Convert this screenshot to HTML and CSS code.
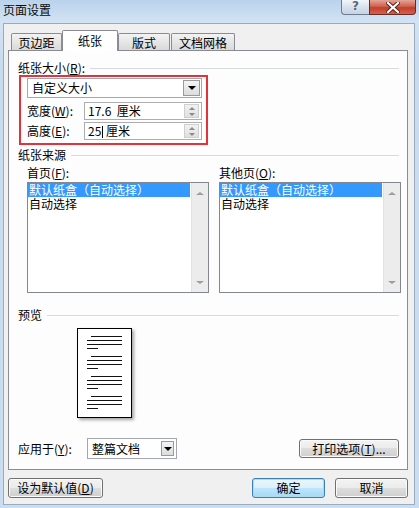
FILE: index.html
```html
<!DOCTYPE html>
<html lang="zh-CN">
<head>
<meta charset="utf-8">
<title>页面设置</title>
<link rel="stylesheet" href="styles.css">
</head>
<body>
<div class="window">
    <div class="titlebar">
        <span class="title">页面设置</span>
        <div class="caption">
            <span class="cap-help">?</span>
            <span class="cap-close">
                <svg width="14" height="11" viewBox="0 0 14 11"><path d="M2 1 L12 10 M12 1 L2 10" stroke="#5a1d14" stroke-width="4" stroke-linecap="square"/><path d="M2 1 L12 10 M12 1 L2 10" stroke="#fff" stroke-width="2.2" stroke-linecap="square"/></svg>
            </span>
        </div>
    </div>

    <div class="client">
        <!-- 标签 -->
        <ul class="tabs">
            <li class="t1">页边距</li>
            <li class="t2 on">纸张</li>
            <li class="t3">版式</li>
            <li class="t4">文档网格</li>
        </ul>

        <div class="panel">
            <div class="group-head"><span>纸张大小(<u>R</u>):</span><i class="rule"></i></div>

            <div class="mark">
                <div class="combo size-combo">
                    <span class="combo-text">自定义大小</span>
                    <b class="drop"><i class="tri"></i></b>
                </div>
                <div class="field">
                    <label>宽度(<u>W</u>):</label>
                    <div class="spin">
                        <span class="spin-text">17.6&nbsp; 厘米</span>
                        <b class="spinbtn"><i class="up"></i><i class="down"></i></b>
                    </div>
                </div>
                <div class="field f2">
                    <label>高度(<u>E</u>):</label>
                    <div class="spin">
                        <span class="spin-text">25<i class="caret"></i> 厘米</span>
                        <b class="spinbtn"><i class="up"></i><i class="down"></i></b>
                    </div>
                </div>
            </div>

            <div class="group-head head2"><span>纸张来源</span><i class="rule"></i></div>

            <div class="sources">
                <div class="src">
                    <label>首页(<u>F</u>):</label>
                    <div class="listbox">
                        <ul class="items">
                            <li class="sel">默认纸盒（自动选择）</li>
                            <li>自动选择</li>
                        </ul>
                        <div class="vscroll"><i class="up"></i><i class="down"></i></div>
                    </div>
                </div>
                <div class="src">
                    <label>其他页(<u>O</u>):</label>
                    <div class="listbox">
                        <ul class="items">
                            <li class="sel">默认纸盒（自动选择）</li>
                            <li>自动选择</li>
                        </ul>
                        <div class="vscroll"><i class="up"></i><i class="down"></i></div>
                    </div>
                </div>
            </div>

            <div class="group-head head3"><span>预览</span><i class="rule"></i></div>

            <div class="page">
                <div class="para"><i class="l1"></i><i class="l2"></i><i class="l2"></i><i class="l4"></i></div>
                <div class="para"><i class="l1"></i><i class="l2"></i><i class="l2"></i><i class="l4"></i></div>
                <div class="para"><i class="l1"></i><i class="l2"></i><i class="l2"></i><i class="l4"></i></div>
                <div class="para"><i class="l1"></i><i class="l2"></i><i class="l2"></i><i class="l4"></i></div>
            </div>

            <div class="apply-row">
                <label>应用于(<u>Y</u>):</label>
                <div class="combo apply-combo">
                    <span class="combo-text">整篇文档</span>
                    <b class="drop"><i class="tri"></i></b>
                </div>
                <span class="btn print-btn">打印选项(<u>T</u>)...</span>
            </div>
        </div>

        <div class="footer">
            <span class="btn default-btn">设为默认值(<u>D</u>)</span>
            <span class="btn ok-btn">确定</span>
            <span class="btn cancel-btn">取消</span>
        </div>
    </div>
</div>
</body>
</html>
```

FILE: styles.css
```css
*{margin:0;padding:0;box-sizing:border-box}
body{width:419px;height:508px;overflow:hidden;font:12px/14px "Noto Sans CJK SC","Microsoft YaHei",sans-serif;color:#000;background:#c9dcef}
ul{list-style:none}
u{text-decoration:underline;text-underline-offset:1px}

.window{height:508px;display:flex;flex-direction:column;background:linear-gradient(#bad2eb,#d3e3f4 22px,#c9dcef 60px,#cbddf0)}

/* 标题栏 */
.titlebar{height:23px;display:flex;justify-content:space-between;align-items:flex-start;padding-left:3px}
.title{line-height:20px;color:#0b0b0b}
.caption{display:flex;margin-right:3px}
.cap-help{width:28px;height:15px;border:1px solid #6d7c90;border-top:none;border-right:none;border-radius:0 0 0 4px;background:linear-gradient(#f3f6fb,#d8e1ed 50%,#c7d3e3);text-align:center;font:bold 12px/13px "DejaVu Sans",sans-serif;color:#55657a;text-shadow:0 0 1px #fff}
.cap-close{width:47px;height:15px;border:1px solid #6b2a22;border-top:none;border-radius:0 0 4px 0;background:linear-gradient(#e5a497,#d0624f 45%,#c23e2b 55%,#d2634d);display:flex;justify-content:center;align-items:center}

/* 客户区 */
.client{flex:1;margin:0 4px 3px 3px;background:#f0f0f0;border:1px solid #9aabc0;display:flex;flex-direction:column}

.tabs{height:26px;display:flex;align-items:flex-end;padding-left:7px}
.tabs li{height:17px;border:1px solid #898c95;border-bottom:none;border-radius:2px 2px 0 0;background:linear-gradient(#f3f3f3,#e6e6e6 50%,#d9d9d9);text-align:center;line-height:17px}
.tabs .t1{width:51px}
.tabs .t2{width:56px}
.tabs .t3{width:52px}
.tabs .t4{width:64px;margin-left:1px}
.tabs li.on{height:21px;margin-bottom:-1px;background:#fff;position:relative;line-height:19px;border-left:1px solid #898c95}

.panel{height:420px;margin:0 6px 0 4px;border:1px solid #898c95;background:#fdfdfd;padding:10px 8px 10px 9px;display:flex;flex-direction:column}

.group-head{height:14px;display:flex;align-items:center}
.group-head .rule{flex:1;height:1px;background:#d5dadf;margin-left:5px}
.head2{margin-top:3px}
.head3{margin-top:15px}

/* 红色标记框 */
.mark{width:189px;height:70px;margin-left:1px;border:2px solid #e2333a;padding:1px 0 0 6px}

.combo{display:flex;height:20px;border:1px solid #a3a8b0;background:#fff}
.combo-text{flex:1;padding-left:4px;line-height:18px}
.drop{width:17px;margin:1px;border:1px solid #9a9a9a;background:linear-gradient(#f4f4f4,#dcdcdc);display:flex;align-items:center;justify-content:center}
.tri{width:0;height:0;border-left:4px solid transparent;border-right:4px solid transparent;border-top:4px solid #000}
.size-combo{width:175px}

.field{display:flex;align-items:center;margin-top:4px}
.field.f2{margin-top:2px}
.field label{width:57px}
.spin{width:118px;height:18px;border:1px solid #abadb3;background:#fff;display:flex}
.spin-text{flex:1;padding-left:3px;line-height:16px}
.caret{display:inline-block;width:1px;height:12px;background:#000;vertical-align:-2px;margin-left:1px}
.spinbtn{width:15px;margin:1px 2px 1px 0;background:linear-gradient(#f2f2f2,#e0e0e0);border:1px solid #cfcfcf;display:flex;flex-direction:column;align-items:center;justify-content:space-around}
.spinbtn .up{width:0;height:0;border-left:3px solid transparent;border-right:3px solid transparent;border-bottom:3px solid #8a8a8a}
.spinbtn .down{width:0;height:0;border-left:3px solid transparent;border-right:3px solid transparent;border-top:3px solid #8a8a8a}

/* 纸张来源 */
.sources{display:grid;grid-template-columns:182px 182px;column-gap:10px;margin-left:9px;margin-top:4px}
.src label{display:block;height:14px}
.listbox{margin-top:2px;height:111px;border:1px solid #828790;background:#fff;display:flex}
.items{flex:1;padding:0 1px 0 0}
.items li{height:14px;line-height:14px;padding-left:1px;white-space:nowrap}
.items li.sel{background:#3399ff;color:#fff}
.vscroll{width:17px;background:#ececec;border-left:1px solid #e2e2e2;display:flex;flex-direction:column;align-items:center;justify-content:space-between;padding:9px 0 8px}
.vscroll .up{width:0;height:0;border-left:4px solid transparent;border-right:4px solid transparent;border-bottom:3px solid #9c9c9c}
.vscroll .down{width:0;height:0;border-left:4px solid transparent;border-right:4px solid transparent;border-top:3px solid #9c9c9c}

/* 预览 */
.page{width:55px;height:90px;margin:6px 0 0 59px;border:1px solid #000;background:#fff;box-shadow:2px 2px 3px rgba(0,0,0,.35);padding:7px 0 0 9px}
.para{display:flex;flex-direction:column;gap:3px;margin-bottom:7px}
.para i{display:block;height:1px;background:#111}
.para .l1{width:31px;margin-left:4px}
.para .l2{width:35px}
.para .l4{width:11px}

.apply-row{margin-top:auto;height:21px;display:flex;align-items:center}
.apply-row label{width:69px}
.apply-combo{width:90px;height:21px}
.apply-combo .combo-text{line-height:19px}
.apply-combo .drop{width:13px;margin:2px 2px 2px 0}

/* 按钮 */
.btn{height:20px;border:1px solid #707070;border-radius:3px;background:linear-gradient(#f3f3f3,#ebebeb 50%,#dddddd 50%,#cfcfcf);box-shadow:inset 0 0 0 1px #fbfbfb;text-align:center;line-height:18px;display:block}
.print-btn{margin-left:auto;width:100px;height:19px;line-height:17px}

.footer{display:flex;padding:8px 6px 0 4px}
.default-btn{width:95px}
.ok-btn{width:73px;margin-left:auto;border-color:#3c7fb1;box-shadow:inset 0 0 0 1px #a9dbf6;background:linear-gradient(#eaf6fd,#d9f0fc 50%,#bee6fd 50%,#a7d9f5)}
.cancel-btn{width:73px;margin-left:10px}
```
